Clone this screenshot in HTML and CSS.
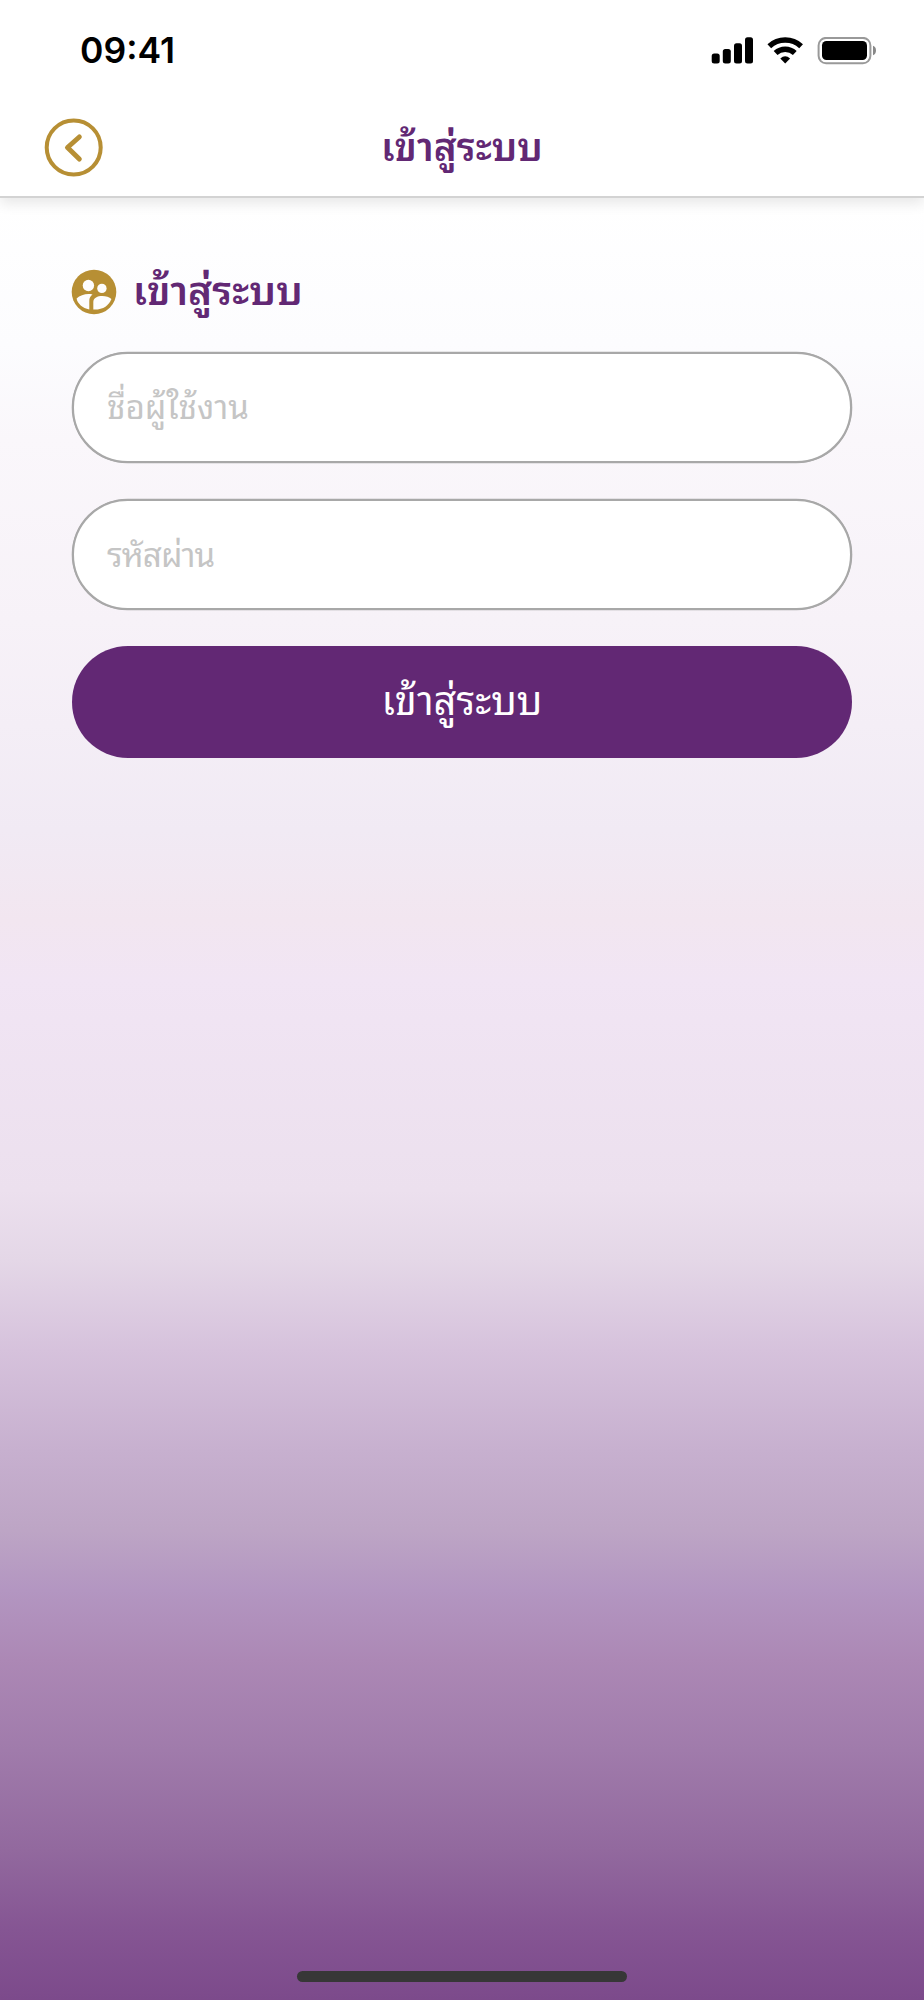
FILE: index.html
```html
<!DOCTYPE html>
<html lang="th">
<head>
<meta charset="utf-8">
<title>เข้าสู่ระบบ</title>
<link rel="stylesheet" href="styles.css">
</head>
<body>
<div class="screen">
  <header class="top">
    <div class="status">
      <span class="time">09:41</span>
      <svg class="status-icons" width="170" height="30" viewBox="0 0 170 30">
        <rect x="1.700" y="16.500" width="8" height="10" rx="2.500"/>
        <rect x="12.800" y="12" width="8" height="14.500" rx="2.500"/>
        <rect x="24" y="6.200" width="8" height="20.300" rx="2.500"/>
        <rect x="35" y="0.300" width="8" height="26.200" rx="2.500"/>
        <g fill="none" stroke="#000" stroke-width="5.500">
          <path d="M59.300 9.200A23.500 23.500 0 0 1 91.100 9.200"/>
          <path d="M65.600 16A14 14 0 0 1 84.800 16"/>
        </g>
        <path d="M75.200 26.600L70.300 21.600Q75.200 17 80.100 21.600Z"/>
        <rect x="108.600" y="0.900" width="51.800" height="25.400" rx="7.500" fill="none" stroke="#999" stroke-width="2"/>
        <rect x="112" y="4" width="45" height="19" rx="4.500"/>
        <path d="M163 8.800Q166 10 166 13.500T163 18.200Z" fill="#888"/>
      </svg>
    </div>
    <div class="nav">
      <svg class="back" width="60" height="60" viewBox="0 0 60 60" fill="none" stroke="#b78f34">
        <circle cx="29.700" cy="29.500" r="27" stroke-width="4"/>
        <path d="M35.300 19L23.500 29.500L35.300 41" stroke-width="5" stroke-linecap="round" stroke-linejoin="round"/>
      </svg>
      <h1 class="title">เข้าสู่ระบบ</h1>
    </div>
  </header>
  <main class="form">
    <div class="heading">
      <svg width="46" height="46" viewBox="0 0 46 46">
        <circle cx="23" cy="23" r="22.300" fill="#b78f34"/>
        <g fill="#fdfdfe">
          <circle cx="17.400" cy="16.500" r="5.700"/>
          <circle cx="30.900" cy="19.400" r="4.700"/>
          <path d="M5.600 29.400C9.500 26 16 24.200 21.500 25.600C19 27.500 18.300 29.500 18.300 32V40.400C11.500 39 6.500 34.500 5.600 29.400Z"/>
          <path d="M22.300 40.600V33C22.300 25.500 36 25.500 40.400 30C38 36.500 32 41 22.300 40.600Z"/>
        </g>
      </svg>
      <h2 class="heading-text">เข้าสู่ระบบ</h2>
    </div>
    <div class="field"><span class="ph user">ชื่อผู้ใช้งาน</span></div>
    <div class="field"><span class="ph pass">รหัสผ่าน</span></div>
    <div class="button"><span class="label">เข้าสู่ระบบ</span></div>
  </main>
  <footer class="home"></footer>
</div>
</body>
</html>
```
FILE: styles.css
```css
* { box-sizing: border-box; }
body { margin: 0; font-family: Inter, "Noto Sans Thai Looped", "Noto Looped Thai", Loma, Waree, Garuda, Umpush, Sarabun, "Noto Sans Thai", sans-serif; }
.screen {
  width: 924px; height: 2000px; display: flex; flex-direction: column; overflow: hidden;
  background: linear-gradient(#fff 200px, #fcfcfe 345px, #faf7fb 440px, #f7f2f8 620px, #f1eaf4 830px, #f2e6f0 920px, #f1e5f4 980px, #ece0ee 1190px, #e4d7e7 1260px, #d6c2dc 1350px, #c7b0cf 1450px, #bda5c5 1530px, #b396c1 1590px, #ac88b5 1660px, #a07bab 1750px, #92699e 1850px, #855593 1930px, #7c4a8b 2000px);
}
.top { height: 198px; flex: none; background: #fff; border-bottom: 2px solid #d3d3d3; box-shadow: 0 6px 12px rgba(0,0,0,.09); }
.status { height: 100px; padding: 37px 44px 0 80px; display: flex; justify-content: space-between; }
.time { font-weight: 600; font-size: 35.500px; line-height: 28px; }
.nav { height: 96px; display: grid; grid-template-columns: 104px 1fr 104px; align-items: center; }
.back { justify-self: end; }
.title { margin: 0; padding-bottom: 2px; text-align: center; font-size: 38.700px; line-height: 58px; font-weight: 600; color: #622874; }
.form { flex: 1; padding: 71px 71.700px 0; }
.heading { height: 46px; margin: 0 0 36.500px -1px; display: flex; align-items: center; gap: 16px; }
.heading-text { margin: 0; padding-bottom: 2px; font-size: 40.700px; line-height: 44px; font-weight: 600; color: #622874; }
.field, .button { height: 111.600px; margin-bottom: 35.700px; border-radius: 56px; display: flex; align-items: center; }
.field { background: #fff; border: 2px solid #a8a8a8; box-shadow: 0 0 0 .3px #a8a8a8; padding-left: 33.300px; }
.ph { font-size: 33.200px; color: #c5c5c5; line-height: 40px; }
.pass { letter-spacing: -.9px; }
.button { background: #622874; justify-content: center; }
.label { color: #fff; padding-bottom: 2px; font-size: 39.700px; line-height: 44px; }
.home { width: 330px; height: 11px; border-radius: 6px; background: #373737; margin: 0 auto 18px; }
```
